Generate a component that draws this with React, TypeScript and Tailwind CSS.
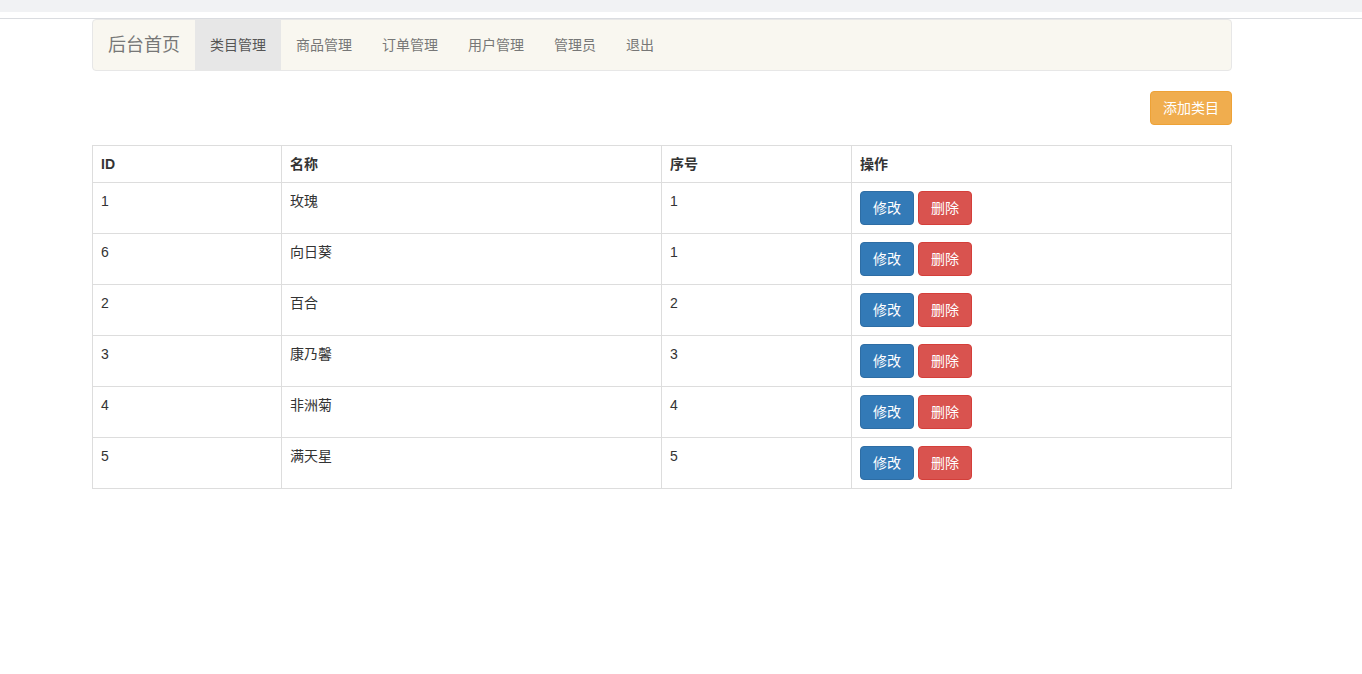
import React from 'react';

const font = { fontFamily: '"Liberation Sans", "Noto Sans CJK SC", Arial, sans-serif' };

const rows = [
  { id: 1, name: '玫瑰', order: 1 },
  { id: 6, name: '向日葵', order: 1 },
  { id: 2, name: '百合', order: 2 },
  { id: 3, name: '康乃馨', order: 3 },
  { id: 4, name: '非洲菊', order: 4 },
  { id: 5, name: '满天星', order: 5 },
];

const navItems = ['商品管理', '订单管理', '用户管理', '管理员', '退出'];

export default function App() {
  return (
    <div className="min-h-screen w-full bg-white text-[14px] leading-5 text-[#333]" style={font}>
      {/* browser chrome remnant */}
      <div className="h-[12px] bg-[#f1f2f4]" />
      <div className="h-[7px] border-b border-[#dadce0] bg-white" />

      <div className="ml-[92px] w-[1140px]">
        {/* navbar */}
        <nav className="flex h-[52px] items-stretch rounded border border-[#e7e7e7] bg-[#f9f7f0]">
          <a className="flex items-center px-[15px] text-[18px] text-[#777]">后台首页</a>
          <a className="flex items-center bg-[#e7e7e7] px-[15px] text-[#555]">类目管理</a>
          {navItems.map((item) => (
            <a key={item} className="flex items-center px-[15px] text-[#777]">
              {item}
            </a>
          ))}
        </nav>

        <div className="mt-[20px] flex justify-end">
          <button className="h-[34px] rounded border border-[#eea236] bg-[#f0ad4e] px-[12px] text-white">
            添加类目
          </button>
        </div>

        {/* table */}
        <table className="mt-[20px] w-full table-fixed border-collapse border border-[#ddd]">
          <colgroup>
            <col className="w-[189px]" />
            <col className="w-[380px]" />
            <col className="w-[190px]" />
            <col />
          </colgroup>
          <thead>
            <tr className="h-[37px]">
              <th className="border border-[#ddd] px-[8px] text-left align-middle font-bold">ID</th>
              <th className="border border-[#ddd] px-[8px] text-left align-middle font-bold">名称</th>
              <th className="border border-[#ddd] px-[8px] text-left align-middle font-bold">序号</th>
              <th className="border border-[#ddd] px-[8px] text-left align-middle font-bold">操作</th>
            </tr>
          </thead>
          <tbody>
            {rows.map((r) => (
              <tr key={r.id} className="h-[51px]">
                <td className="border border-[#ddd] p-[8px] align-top">{r.id}</td>
                <td className="border border-[#ddd] p-[8px] align-top">{r.name}</td>
                <td className="border border-[#ddd] p-[8px] align-top">{r.order}</td>
                <td className="border border-[#ddd] p-[8px] align-top">
                  <div className="flex gap-[4px]">
                    <button className="h-[34px] rounded border border-[#2e6da4] bg-[#337ab7] px-[12px] text-white">
                      修改
                    </button>
                    <button className="h-[34px] rounded border border-[#d43f3a] bg-[#d9534f] px-[12px] text-white">
                      删除
                    </button>
                  </div>
                </td>
              </tr>
            ))}
          </tbody>
        </table>
      </div>
    </div>
  );
}
